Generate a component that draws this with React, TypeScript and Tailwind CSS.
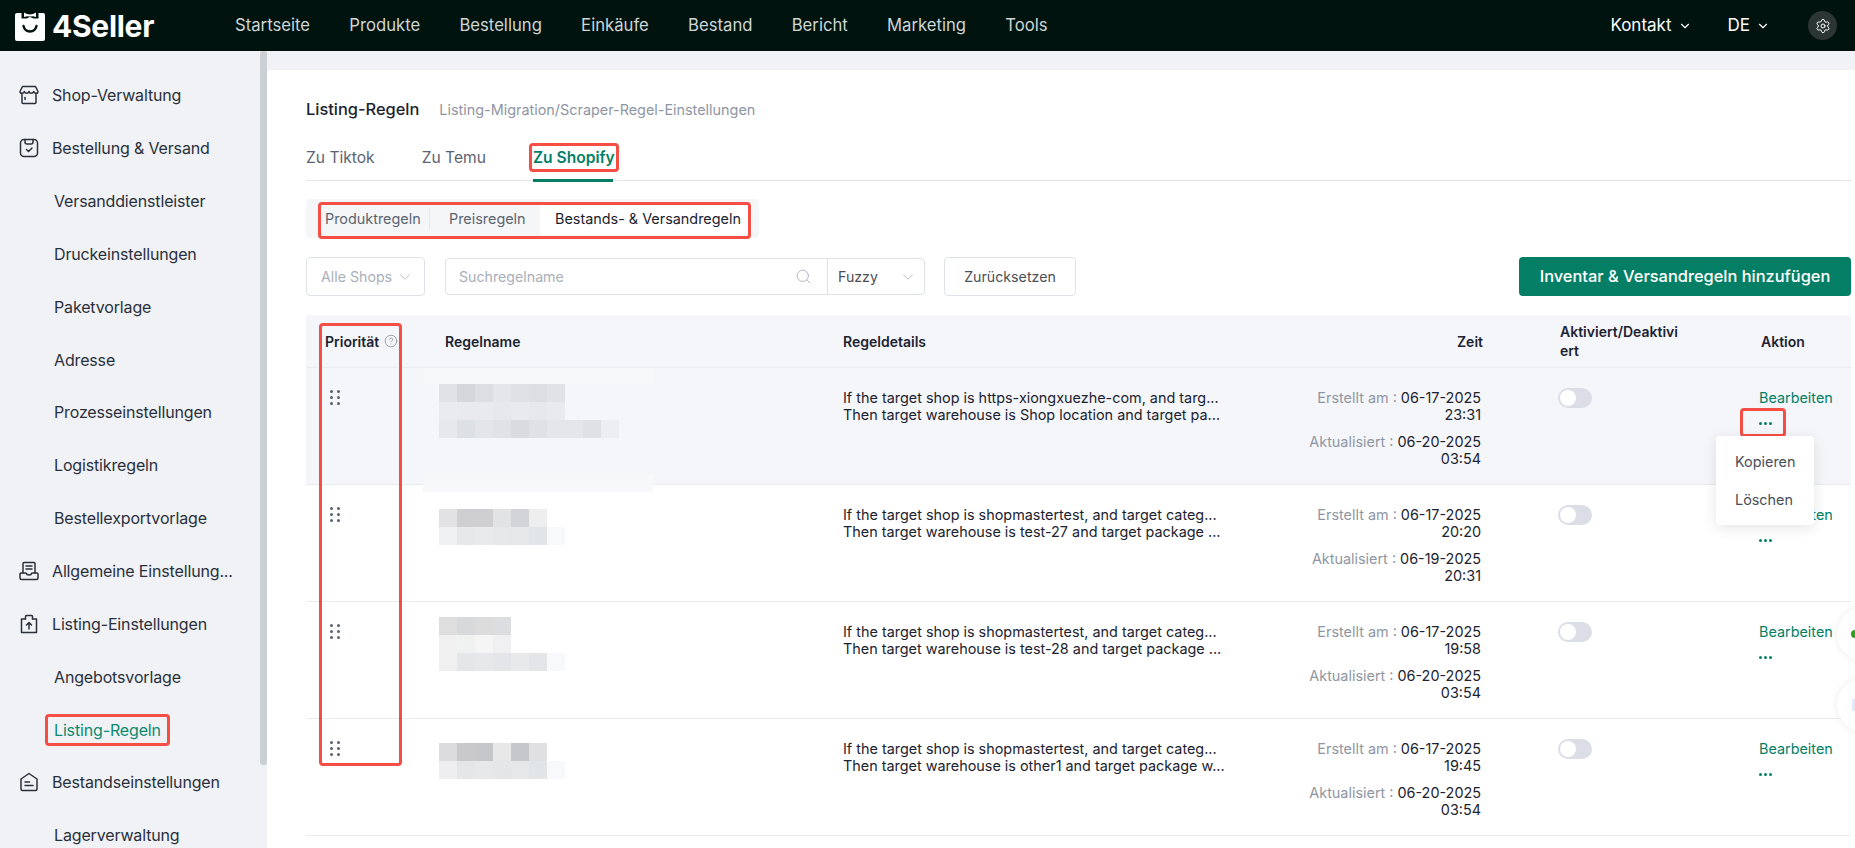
import React from 'react';
import { ChevronDown, CircleHelp, Search, Settings } from 'lucide-react';

const nav = ['Startseite', 'Produkte', 'Bestellung', 'Einkäufe', 'Bestand', 'Bericht', 'Marketing', 'Tools'];

const RedBox = ({ className }: { className: string }) => (
  <span className={`absolute border-[3px] border-[#f44e45] rounded-[4px] pointer-events-none ${className}`} />
);

const ShopIcon = () => (
  <svg width="20" height="20" viewBox="0 0 20 20" fill="none" stroke="#2a303b" strokeWidth="1.5" strokeLinejoin="round" strokeLinecap="round">
    <path d="M3.500 1.500h13l2.500 5c0 1.100-1 1.800-2 1.800s-1.900-.7-2.300-1.800c-.4 1.100-1.400 1.800-2.350 1.800S10.400 7.600 10 6.500c-.4 1.100-1.400 1.800-2.350 1.800S5.700 7.600 5.300 6.500C4.900 7.600 4 8.300 3 8.300s-2-.7-2-1.800l2.500-5z" />
    <path d="M3 9v8.500a1 1 0 0 0 1 1h12a1 1 0 0 0 1-1V9" />
    <path d="M6 12.500v2" />
  </svg>
);

const OrderIcon = () => (
  <svg width="20" height="20" viewBox="0 0 20 20" fill="none" stroke="#2a303b" strokeWidth="1.5" strokeLinejoin="round" strokeLinecap="round">
    <rect x="1.500" y="1.500" width="17" height="17" rx="3.500" />
    <path d="M6 1.500v2.500a2 2 0 0 0 2 2h4a2 2 0 0 0 2-2v-2.500" />
    <path d="M7.500 11.500l2 2 3.500-3.500" />
  </svg>
);

const GeneralIcon = () => (
  <svg width="20" height="20" viewBox="0 0 20 20" fill="none" stroke="#2a303b" strokeWidth="1.5" strokeLinejoin="round" strokeLinecap="round">
    <path d="M4 12V2.500a1 1 0 0 1 1-1h10a1 1 0 0 1 1 1V12" />
    <path d="M7 5h6M7 8h6" />
    <path d="M1 13a1 1 0 0 1 1-1h5c.5 1.500 1.500 2 3 2s2.500-.5 3-2h5a1 1 0 0 1 1 1v4a1.500 1.500 0 0 1-1.500 1.500h-15A1.500 1.500 0 0 1 1 17v-4z" />
  </svg>
);

const ListingIcon = () => (
  <svg width="20" height="20" viewBox="0 0 20 20" fill="none" stroke="#2a303b" strokeWidth="1.5" strokeLinejoin="round" strokeLinecap="round">
    <path d="M6.500 5H2.500v13.500h15V5h-4" />
    <path d="M6.500 5V2.500a1 1 0 0 1 1-1h5a1 1 0 0 1 1 1V5" />
    <path d="M10 15V8.500M7.500 11L10 8.500l2.500 2.500" />
  </svg>
);

const StockIcon = () => (
  <svg width="20" height="20" viewBox="0 0 20 20" fill="none" stroke="#2a303b" strokeWidth="1.5" strokeLinejoin="round" strokeLinecap="round">
    <path d="M2 7L10 1.500 18 7v10a1.500 1.500 0 0 1-1.500 1.500h-13A1.500 1.500 0 0 1 2 17V7z" />
    <path d="M6 10h4.500M6 13.500h8" />
  </svg>
);

const Logo = () => (
  <svg width="30" height="30" viewBox="0 0 30 30" fill="none">
    <rect x="0" y="2" width="30" height="28" rx="2" fill="#fff" />
    <path d="M6.500 0h5l3.500 2 3.500-2h5v7.500h-5L15 6l-3.500 1.500h-5z" fill="#00130f" />
    <path d="M9 1.500l3 1.500 3 0.500 3-0.500 3-1.500v4.500l-3-.8-3 .3-3-.3-3 .8z" fill="#fff" />
    <path d="M8.500 15c1 4 3.500 5.500 6.500 5.500s5.500-1.500 6.500-5.500" stroke="#00130f" strokeWidth="2.400" strokeLinecap="round" />
  </svg>
);

const Header = () => (
  <header className="h-[51px] shrink-0 bg-[#00130f] flex items-center pl-[15px] pr-[18px]">
    <div className="flex items-center w-[220px]">
      <Logo />
      <span className="ml-[7px] text-white text-[30px] font-bold leading-none tracking-[-0.3px]">4Seller</span>
    </div>
    <nav className="flex gap-[39.2px] text-[16.7px] text-[#cfd6d5]">
      {nav.map((n) => (
        <span key={n}>{n}</span>
      ))}
    </nav>
    <div className="ml-auto flex items-center text-white text-[17px]">
      <span>Kontakt</span>
      <ChevronDown className="w-[14px] h-[14px] ml-[6px]" />
      <span className="ml-[36px]">DE</span>
      <ChevronDown className="w-[14px] h-[14px] ml-[6px]" />
      <span className="ml-[38px] w-[29px] h-[29px] rounded-full bg-[#2b3533] flex items-center justify-center">
        <Settings className="w-[16px] h-[16px] text-white" strokeWidth={1.5} />
      </span>
    </div>
  </header>
);

const SideTop = ({ icon, label }: { icon: React.ReactNode; label: string }) => (
  <div className="h-[52.85px] flex items-center pl-[19px]">
    <span className="w-[33px] shrink-0">{icon}</span>
    <span className="truncate">{label}</span>
  </div>
);

const SideSub = ({ label }: { label: string }) => <div className="h-[52.85px] flex items-center pl-[54px]">{label}</div>;

const Sidebar = () => (
  <aside className="w-[267px] shrink-0 relative flex">
    <div className="w-[260px] pt-[18px] pr-[14px] text-[16px] tracking-[-0.15px] text-[#2a303b] overflow-hidden">
      <SideTop icon={<ShopIcon />} label="Shop-Verwaltung" />
      <SideTop icon={<OrderIcon />} label="Bestellung & Versand" />
      <SideSub label="Versanddienstleister" />
      <SideSub label="Druckeinstellungen" />
      <SideSub label="Paketvorlage" />
      <SideSub label="Adresse" />
      <SideSub label="Prozesseinstellungen" />
      <SideSub label="Logistikregeln" />
      <SideSub label="Bestellexportvorlage" />
      <SideTop icon={<GeneralIcon />} label="Allgemeine Einstellung..." />
      <SideTop icon={<ListingIcon />} label="Listing-Einstellungen" />
      <SideSub label="Angebotsvorlage" />
      <div className="h-[52.85px] flex items-center pl-[54px] text-[#0b8a6f]">
        <span className="relative">
          Listing-Regeln
          <RedBox className="-inset-x-[9px] -inset-y-[4px]" />
        </span>
      </div>
      <SideTop icon={<StockIcon />} label="Bestandseinstellungen" />
      <SideSub label="Lagerverwaltung" />
    </div>
    <div className="w-[7px] h-[714px] bg-[#ccd0d4] rounded-[3px]" />
  </aside>
);

type Cell = string;
interface Rule {
  pad: string;
  mosaic: Cell[][];
  shop: string;
  then: string;
  created: [string, string];
  updated: [string, string];
}

const rules: Rule[] = [
  {
    pad: 'pt-[16px]',
    mosaic: [
      ['#e0e2e6', '#d5d7db', '#dcdee2', '#e4e6ea', '#dfe1e5', '#dcdee2', '#e0e2e6'],
      ['#e9ebef', '#e8eaee', '#e8eaee', '#e6e8ec', '#e8eaee', '#e6e8ec', '#e8eaee'],
      ['#e6e8ec', '#dde0e4', '#e3e5e9', '#e0e2e6', '#d9dbe0', '#dfe1e5', '#e4e6ea', '#e4e6ea', '#dfe1e5', '#eceef1'],
    ],
    shop: 'If the target shop is https-xiongxuezhe-com, and targ...',
    then: 'Then target warehouse is Shop location and target pa...',
    created: ['06-17-2025', '23:31'],
    updated: ['06-20-2025', '03:54'],
  },
  {
    pad: 'pt-[24px]',
    mosaic: [
      ['#e2e2e4', '#cfcfd1', '#cfcfd1', '#e2e3e5', '#d3d4d8', '#eeeeef'],
      ['#eff0f1', '#e7e8ea', '#e9eaec', '#e7e8ea', '#e6e7e9', '#e2e5e8', '#f8f9fa'],
    ],
    shop: 'If the target shop is shopmastertest, and target categ...',
    then: 'Then target warehouse is test-27 and target package ...',
    created: ['06-17-2025', '20:20'],
    updated: ['06-19-2025', '20:31'],
  },
  {
    pad: 'pt-[15px]',
    mosaic: [
      ['#dedede', '#d8d9da', '#dcdcdd', '#dcdde0'],
      ['#f0f0f1', '#f0f1f1', '#f5f5f6', '#f0f0f2'],
      ['#f0f0f1', '#e5e6e8', '#e7e8ea', '#e3e5e8', '#e8e9eb', '#e3e5e8', '#f8f9fa'],
    ],
    shop: 'If the target shop is shopmastertest, and target categ...',
    then: 'Then target warehouse is test-28 and target package ...',
    created: ['06-17-2025', '19:58'],
    updated: ['06-20-2025', '03:54'],
  },
  {
    pad: 'pt-[24px]',
    mosaic: [
      ['#dcdcde', '#c9c9cc', '#c6c7ca', '#e8e8e9', '#c6c7ca', '#e0e0e2'],
      ['#eeeef0', '#e5e6e8', '#e7e8ea', '#e5e6e8', '#e6e7e9', '#e2e5e8', '#f8f9fa'],
    ],
    shop: 'If the target shop is shopmastertest, and target categ...',
    then: 'Then target warehouse is other1 and target package w...',
    created: ['06-17-2025', '19:45'],
    updated: ['06-20-2025', '03:54'],
  },
];

const GripDots = () => (
  <svg width="10" height="16" viewBox="0 0 10 16" fill="#5a6170" className="mt-[6px] ml-[5px]">
    <rect x="0" y="0" width="3" height="3" rx="1.500" />
    <rect x="7" y="0" width="3" height="3" rx="1.500" />
    <rect x="0" y="6" width="3" height="3" rx="1.500" />
    <rect x="7" y="6" width="3" height="3" rx="1.500" />
    <rect x="0" y="12" width="3" height="3" rx="1.500" />
    <rect x="7" y="12" width="3" height="3" rx="1.500" />
  </svg>
);

const Toggle = () => (
  <div className="-ml-[2px] w-[34px] h-[20px] rounded-full bg-[#dbdee6] p-[2px]">
    <div className="w-[16px] h-[16px] rounded-full bg-white" />
  </div>
);

const TimeBlock = ({ label, value }: { label: string; value: [string, string] }) => (
  <div className="flex flex-col items-end">
    <div>
      <span className="text-[#8f96a3]">{label} : </span>
      {value[0]}
    </div>
    <div>{value[1]}</div>
  </div>
);

const gridCols = 'grid grid-cols-[139px_398px_400px_240px_77px_199px_92px]';

const RuleRow = ({ rule, index }: { rule: Rule; index: number }) => (
  <div className={`${gridCols} h-[117px] border-b border-[#e9ebf0] ${index === 0 ? 'bg-[#f5f6fa]' : 'bg-white'} text-[14.4px] leading-[17px] text-[#1c2330]`}>
    <div className="pl-[19px] pt-[16px]">
      <GripDots />
    </div>
    <div className={`relative -ml-[6px] ${rule.pad}`}>
      {index === 0 && (
        <>
          <div className="absolute -left-[16px] top-0 w-[230px] h-[16px] bg-[#f7f8fa]" />
          <div className="absolute -left-[16px] top-[106px] w-[230px] h-[18px] bg-[#f7f8fa] z-10" />
        </>
      )}
      {rule.mosaic.map((line, i) => (
        <div key={i} className="flex">
          {line.map((c, j) => (
            <div key={j} className="w-[18px] h-[18px]" style={{ backgroundColor: c }} />
          ))}
        </div>
      ))}
    </div>
    <div className="pt-[21px] whitespace-nowrap">
      <div>{rule.shop}</div>
      <div>{rule.then}</div>
    </div>
    <div className="pt-[21px] pr-[2px] flex flex-col gap-[10px]">
      <TimeBlock label="Erstellt am" value={rule.created} />
      <TimeBlock label="Aktualisiert" value={rule.updated} />
    </div>
    <div />
    <div className="pt-[20px]">
      <Toggle />
    </div>
    <div className="pt-[21px] text-[#047f66]">
      <div>Bearbeiten</div>
      <div className="relative mt-[9px] w-[13px] flex gap-[2.5px] h-[17px] items-center">
        <span className="w-[2.5px] h-[2.5px] rounded-full bg-[#047f66]" />
        <span className="w-[2.5px] h-[2.5px] rounded-full bg-[#047f66]" />
        <span className="w-[2.5px] h-[2.5px] rounded-full bg-[#047f66]" />
        {index === 0 && <RedBox className="-left-[19px] -top-[7px] w-[46px] h-[29px]" />}
        {index === 0 && (
          <div className="absolute -left-[43px] top-[21px] w-[98px] h-[89px] bg-white rounded-[4px] shadow-[0_3px_14px_rgba(0,0,0,0.1)] z-20 text-[14.4px] text-[#4a4f58] pl-[19px] pt-[17px] flex flex-col gap-[21px]">
            <span>Kopieren</span>
            <span>Löschen</span>
          </div>
        )}
      </div>
    </div>
  </div>
);

const Select = ({ className, label, text }: { className: string; label: string; text: string }) => (
  <div className={`flex items-center justify-between ${className}`}>
    <span className={text}>{label}</span>
    <ChevronDown className="w-[18px] h-[18px] text-[#a9afba]" strokeWidth={1.1} />
  </div>
);

const Content = () => (
  <main className="flex-1 mt-[19px] bg-white rounded-tl-[4px] pl-[39px] pr-[4px] relative overflow-hidden">
    <div className="pt-[27px] h-[62px] flex items-baseline">
      <span className="text-[16.4px] font-medium text-[#1c2330]">Listing-Regeln</span>
      <span className="ml-[20px] text-[14.4px] text-[#8f96a3]">Listing-Migration/Scraper-Regel-Einstellungen</span>
    </div>
    <div className="flex h-[49px] border-b border-[#e4e6ec] text-[15.6px] text-[#5c6472]">
      <span className="pt-[14px]">Zu Tiktok</span>
      <span className="pt-[14px] ml-[47px]">Zu Temu</span>
      <span className="ml-[47px] pt-[14px] h-[50px] w-[80px] border-b-[3px] border-[#047f66] relative font-semibold text-[#047f66] whitespace-nowrap">
        Zu Shopify
        <RedBox className="-left-[4px] top-[11px] w-[90px] h-[29px]" />
      </span>
    </div>
    <div className="mt-[18px] w-[453px] h-[39px] bg-[#f5f6f8] rounded-[4px] flex items-center relative text-[14.4px]">
      <span className="pl-[19px] w-[124px] text-[#5c6472] border-r border-[#e4e6ec] leading-[20px] pt-[1px]">Produktregeln</span>
      <span className="w-[110px] pl-[19px] text-[#5c6472] pt-[1px]">Preisregeln</span>
      <span className="h-[33px] flex items-center flex-1 bg-white rounded-[4px] pl-[15px] mr-[7px] text-[#1c2330] whitespace-nowrap pt-[1px]">Bestands- &amp; Versandregeln</span>
      <RedBox className="left-[12px] top-[3px] w-[433px] h-[37px]" />
    </div>
    <div className="mt-[19px] flex h-[39px] text-[14.2px]">
      <Select className="w-[119px] border border-[#dfe2e8] rounded-[4px] pl-[14px] pr-[10px]" label="Alle Shops" text="text-[#a9afba] whitespace-nowrap" />
      <div className="ml-[20px] w-[480px] h-[37px] mt-[1px] flex border border-[#dfe2e8] rounded-[4px]">
        <div className="w-[381px] flex items-center justify-between pl-[13px] pr-[15px]">
          <span className="text-[#a9afba]">Suchregelname</span>
          <Search className="w-[17px] h-[17px] text-[#a9afba]" strokeWidth={1.25} />
        </div>
        <Select className="flex-1 border-l border-[#dfe2e8] pl-[10px] pr-[7px]" label="Fuzzy" text="text-[#4a4f58]" />
      </div>
      <div className="ml-[19px] w-[132px] border border-[#dfe2e8] rounded-[4px] flex items-center justify-center text-[#4a4f58]">Zurücksetzen</div>
      <div className="ml-auto w-[332px] rounded-[4px] bg-[#047f66] text-white text-[16.4px] font-medium flex items-center justify-center whitespace-nowrap">
        Inventar &amp; Versandregeln hinzufügen
      </div>
    </div>
    <div className="mt-[19px] relative">
      <div className={`${gridCols} h-[53px] bg-[#f5f6fa] border-b border-[#e9ebf0] text-[14px] font-semibold text-[#1c2330] leading-[19px] items-center`}>
        <div className="pl-[19px] flex items-center gap-[5px]">
          Priorität
          <CircleHelp className="w-[14px] h-[14px] text-[#8f96a3]" strokeWidth={1.5} />
        </div>
        <div>Regelname</div>
        <div>Regeldetails</div>
        <div className="text-right">Zeit</div>
        <div />
        <div className="w-[120px] break-all">Aktiviert/Deaktiviert</div>
        <div className="pl-[2px]">Aktion</div>
      </div>
      {rules.map((rule, i) => (
        <RuleRow key={i} rule={rule} index={i} />
      ))}
      <RedBox className="left-[13px] top-[8px] w-[83px] h-[443px] z-10" />
    </div>
    <div className="absolute -right-[36px] top-[537px] w-[54px] h-[54px] rounded-full bg-white shadow-[0_0_8px_rgba(0,0,0,0.08)] flex items-center">
      <span className="ml-[14px] w-[8px] h-[8px] rounded-full bg-[#2f9e1e]" />
    </div>
    <div className="absolute -right-[36px] top-[608px] w-[54px] h-[54px] rounded-full bg-white shadow-[0_0_8px_rgba(0,0,0,0.08)] flex items-center">
      <span className="ml-[15px] w-[6px] h-[12px] bg-[#e4e9fa]" />
    </div>
  </main>
);

export default function App() {
  return (
    <div className="h-[848px] w-[1855px] overflow-hidden flex flex-col bg-[#f0f2f6] [font-family:Inter,sans-serif]">
      <Header />
      <div className="flex flex-1 min-h-0">
        <Sidebar />
        <Content />
      </div>
    </div>
  );
}
